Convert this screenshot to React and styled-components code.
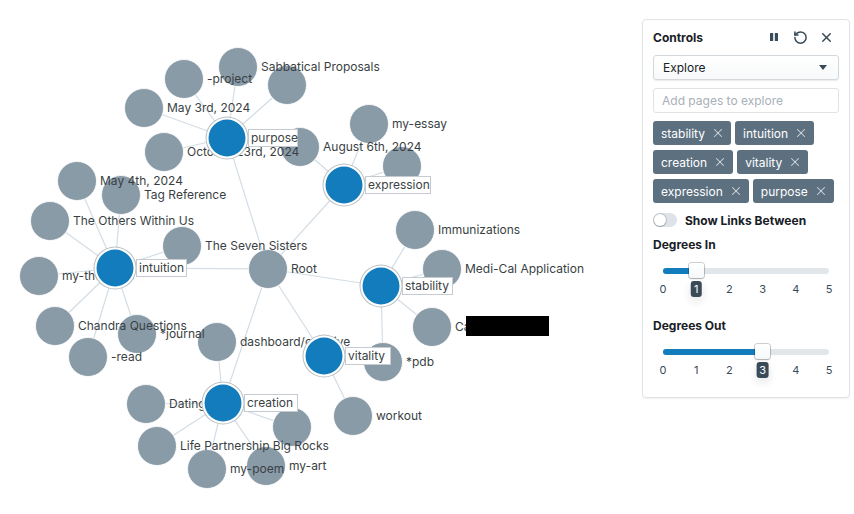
import React, { useState } from 'react';
import styled, { createGlobalStyle } from 'styled-components';
import { RotateCcw, X } from 'lucide-react';

const GlobalStyle = createGlobalStyle`
  html, body { margin: 0; padding: 0; background: #fff; }
  body { font-family: Inter, "Open Sans", sans-serif; color: #182026; }
`;

const Page = styled.div`
  display: flex;
  width: 854px;
  height: 514px;
  overflow: hidden;
`;

const Canvas = styled.div`
  flex: 1;
  position: relative;
`;

const Panel = styled.aside`
  width: 208px;
  box-sizing: border-box;
  margin: 19px 4px 0 0;
  align-self: flex-start;
  padding: 7px 10px 14px;
  border: 1px solid #dfe3e6;
  border-radius: 4px;
  background: #fff;
  box-shadow: 0 1px 2px rgba(16, 22, 26, 0.06);
  display: flex;
  flex-direction: column;
`;

const Header = styled.div`
  display: flex;
  align-items: center;
  justify-content: space-between;
  height: 20px;
`;

const Title = styled.h3`
  margin: 0;
  font-size: 12px;
  font-weight: 700;
  color: #182026;
`;

const IconRow = styled.div`
  display: flex;
  align-items: center;
  gap: 10px;
  margin-right: 5px;
`;

const IconButton = styled.button`
  display: flex;
  align-items: center;
  justify-content: center;
  width: 16px;
  height: 16px;
  padding: 0;
  border: 0;
  background: none;
  color: #394b59;
`;

const Select = styled.div`
  margin-top: 8px;
  height: 25px;
  box-sizing: border-box;
  display: flex;
  align-items: center;
  justify-content: space-between;
  padding: 0 9px;
  border: 1px solid #d3d8dc;
  border-radius: 3px;
  background: linear-gradient(#fff, #f7f9fa);
  box-shadow: 0 1px 1px rgba(16, 22, 26, 0.08);
  font-size: 12px;
  color: #182026;
`;

const Caret = styled.span`
  width: 0;
  height: 0;
  border-left: 4px solid transparent;
  border-right: 4px solid transparent;
  border-top: 5px solid #394b59;
  margin-right: 2px;
`;

const Input = styled.input`
  margin-top: 8px;
  height: 25px;
  box-sizing: border-box;
  padding: 0 8px;
  border: 1px solid #dfe3e6;
  border-radius: 3px;
  font-family: inherit;
  font-size: 12px;
  color: #182026;
  outline: none;
  &::placeholder { color: #a7b0b8; }
`;

const Tags = styled.div`
  margin-top: 8px;
  display: flex;
  flex-wrap: wrap;
  gap: 5px 4px;
`;

const Tag = styled.span`
  display: inline-flex;
  align-items: center;
  gap: 6px;
  height: 24px;
  box-sizing: border-box;
  padding: 0 6px 0 8px;
  border-radius: 3px;
  background: #5c7080;
  color: #fff;
  font-size: 12px;
  svg { color: rgba(255, 255, 255, 0.72); }
`;

const SwitchRow = styled.label`
  margin-top: 8px;
  display: flex;
  align-items: center;
  gap: 8px;
  height: 18px;
  font-size: 12px;
  font-weight: 700;
  color: #182026;
`;

const SwitchTrack = styled.span`
  position: relative;
  width: 24px;
  height: 14px;
  border-radius: 7px;
  background: ${p => (p.$on ? '#137cbd' : '#dde3e8')};
  &::after {
    content: '';
    position: absolute;
    top: 1px;
    left: ${p => (p.$on ? '11px' : '1px')};
    width: 12px;
    height: 12px;
    border-radius: 50%;
    background: #fff;
    box-shadow: 0 0 0 1px rgba(16, 22, 26, 0.15), 0 1px 1px rgba(16, 22, 26, 0.2);
  }
`;

const Heading = styled.div`
  margin-top: ${p => p.$gap}px;
  height: 18px;
  line-height: 18px;
  font-size: 12px;
  font-weight: 700;
  color: #182026;
`;

const SliderBox = styled.div`
  position: relative;
  margin: 4px 10px 0;
  height: 44px;
`;

const Track = styled.div`
  position: absolute;
  left: 0;
  right: 0;
  top: 10px;
  height: 6px;
  border-radius: 3px;
  background: #e1e6ea;
  overflow: hidden;
`;

const Fill = styled.div`
  height: 100%;
  background: #137cbd;
`;

const Handle = styled.div`
  position: absolute;
  top: 5px;
  width: 15px;
  height: 15px;
  box-sizing: border-box;
  margin-left: -7.5px;
  border-radius: 3px;
  background: linear-gradient(#fff, #f5f8fa);
  box-shadow: 0 0 0 1px rgba(16, 22, 26, 0.2), 0 1px 2px rgba(16, 22, 26, 0.2);
`;

const Tick = styled.span`
  position: absolute;
  top: 23px;
  transform: translateX(-50%);
  font-size: 11px;
  line-height: 16px;
  color: #394b59;
`;

const ValueTag = styled.span`
  position: absolute;
  top: 23px;
  transform: translateX(-50%);
  padding: 0 3px;
  border-radius: 3px;
  background: #394b59;
  color: #fff;
  font-size: 11px;
  line-height: 16px;
  box-shadow: 0 4px 10px rgba(16, 22, 26, 0.12);
`;

function PauseIcon() {
  return (
    <svg width="12" height="12" viewBox="0 0 12 12">
      <rect x="2" y="2" width="3.2" height="8" rx="0.5" fill="currentColor" />
      <rect x="6.8" y="2" width="3.2" height="8" rx="0.5" fill="currentColor" />
    </svg>
  );
}

function Slider({ value, max = 5 }) {
  const pct = (value / max) * 100;
  const ticks = Array.from({ length: max + 1 }, (_, i) => i);
  return (
    <SliderBox>
      <Track>
        <Fill style={{ width: `${pct}%` }} />
      </Track>
      {ticks.map(t =>
        t === value ? null : (
          <Tick key={t} style={{ left: `${(t / max) * 100}%` }}>{t}</Tick>
        )
      )}
      <Handle style={{ left: `${pct}%` }} />
      <ValueTag style={{ left: `${pct}%` }}>{value}</ValueTag>
    </SliderBox>
  );
}

const hubs = [
  { id: 'purpose', x: 227, y: 138, w: 49 },
  { id: 'expression', x: 344, y: 185, w: 65 },
  { id: 'intuition', x: 115, y: 268, w: 50 },
  { id: 'stability', x: 381, y: 286, w: 50 },
  { id: 'vitality', x: 324, y: 356, w: 45 },
  { id: 'creation', x: 223, y: 403, w: 53 },
];

const pages = {
  root: { x: 268, y: 269, label: 'Root' },
  project: { x: 184, y: 79, label: '-project' },
  sabb: { x: 238, y: 67, label: 'Sabbatical Proposals' },
  p287: { x: 287, y: 85 },
  may3: { x: 144, y: 108, label: 'May 3rd, 2024' },
  oct: { x: 164, y: 152, label: 'October 23rd, 2024' },
  aug: { x: 300, y: 147, label: 'August 6th, 2024' },
  essay: { x: 369, y: 124, label: 'my-essay' },
  p402: { x: 402, y: 166 },
  may4: { x: 77, y: 181, label: 'May 4th, 2024' },
  tagref: { x: 121, y: 195, label: 'Tag Reference' },
  others: { x: 50, y: 221, label: 'The Others Within Us' },
  seven: { x: 182, y: 246, label: 'The Seven Sisters' },
  myth: { x: 39, y: 276, label: 'my-thoughts' },
  chandra: { x: 55, y: 326, label: 'Chandra Questions' },
  journal: { x: 137, y: 334, label: '*journal' },
  read: { x: 88, y: 357, label: '-read' },
  immun: { x: 415, y: 230, label: 'Immunizations' },
  medi: { x: 442, y: 269, label: 'Medi-Cal Application' },
  ca: { x: 432, y: 327, label: 'Ca' },
  pdb: { x: 383, y: 362, label: '*pdb' },
  workout: { x: 353, y: 416, label: 'workout' },
  dash: { x: 217, y: 342, label: 'dashboard/creative' },
  dating: { x: 146, y: 404, label: 'Dating' },
  p292: { x: 292, y: 427 },
  life: { x: 157, y: 446, label: 'Life Partnership Big Rocks' },
  poem: { x: 207, y: 469, label: 'my-poem' },
  art: { x: 266, y: 466, label: 'my-art' },
};

const links = {
  purpose: ['project', 'sabb', 'p287', 'may3', 'oct', 'root'],
  expression: ['aug', 'essay', 'p402', 'root'],
  intuition: ['may4', 'tagref', 'others', 'seven', 'myth', 'chandra', 'read', 'journal', 'root'],
  stability: ['root', 'immun', 'medi', 'ca', 'pdb'],
  vitality: ['root', 'workout'],
  creation: ['root', 'dash', 'dating', 'p292', 'life', 'poem', 'art'],
};

function Graph() {
  const hubById = Object.fromEntries(hubs.map(h => [h.id, h]));
  return (
    <svg width="642" height="514" style={{ display: 'block' }}>
      <g stroke="#d3dde5" strokeWidth="1.2">
        {Object.entries(links).flatMap(([hub, targets]) =>
          targets.map(t => (
            <line
              key={hub + t}
              x1={hubById[hub].x}
              y1={hubById[hub].y}
              x2={pages[t].x}
              y2={pages[t].y}
            />
          ))
        )}
      </g>
      <g fill="#8a9ba8" stroke="#fff" strokeWidth="0.8">
        {Object.entries(pages).map(([id, p]) => (
          <circle key={id} cx={p.x} cy={p.y} r="19.5" />
        ))}
      </g>
      <g fontFamily="Inter, sans-serif" fontSize="12" fill="#3a3f44">
        {Object.entries(pages).map(([id, p]) =>
          p.label ? (
            <text key={id} x={p.x + 23} y={p.y + 4}>{p.label}</text>
          ) : null
        )}
      </g>
      <rect x="466" y="316" width="83" height="20" fill="#000" />
      {hubs.map(h => (
        <g key={h.id}>
          <circle cx={h.x} cy={h.y} r="21.5" fill="#b9c0c5" />
          <circle cx={h.x} cy={h.y} r="20.5" fill="#fff" />
          <circle cx={h.x} cy={h.y} r="18.5" fill="#137cbd" />
        </g>
      ))}
      {hubs.map(h => (
        <g key={h.id + '-label'}>
          <rect
            x={h.x + 21.5}
            y={h.y - 8.5}
            width={h.w}
            height="17"
            fill="#fff"
            stroke="#c5cbd0"
            strokeWidth="1"
          />
          <text
            x={h.x + 24}
            y={h.y + 4}
            fontFamily="Inter, sans-serif"
            fontSize="12"
            fill="#3a3f44"
          >
            {h.id}
          </text>
        </g>
      ))}
    </svg>
  );
}

export default function App() {
  const [showLinks, setShowLinks] = useState(false);
  const explored = ['stability', 'intuition', 'creation', 'vitality', 'expression', 'purpose'];

  return (
    <>
      <GlobalStyle />
      <Page>
        <Canvas>
          <Graph />
        </Canvas>
        <Panel>
          <Header>
            <Title>Controls</Title>
            <IconRow>
              <IconButton><PauseIcon /></IconButton>
              <IconButton><RotateCcw size={15} strokeWidth={2.4} /></IconButton>
              <IconButton><X size={15} strokeWidth={2.4} /></IconButton>
            </IconRow>
          </Header>
          <Select>
            Explore
            <Caret />
          </Select>
          <Input placeholder="Add pages to explore" />
          <Tags>
            {explored.map(name => (
              <Tag key={name}>
                {name}
                <X size={14} strokeWidth={1.8} />
              </Tag>
            ))}
          </Tags>
          <SwitchRow onClick={() => setShowLinks(!showLinks)}>
            <SwitchTrack $on={showLinks} />
            Show Links Between
          </SwitchRow>
          <Heading $gap={7}>Degrees In</Heading>
          <Slider value={1} />
          <Heading $gap={15}>Degrees Out</Heading>
          <Slider value={3} />
        </Panel>
      </Page>
    </>
  );
}
